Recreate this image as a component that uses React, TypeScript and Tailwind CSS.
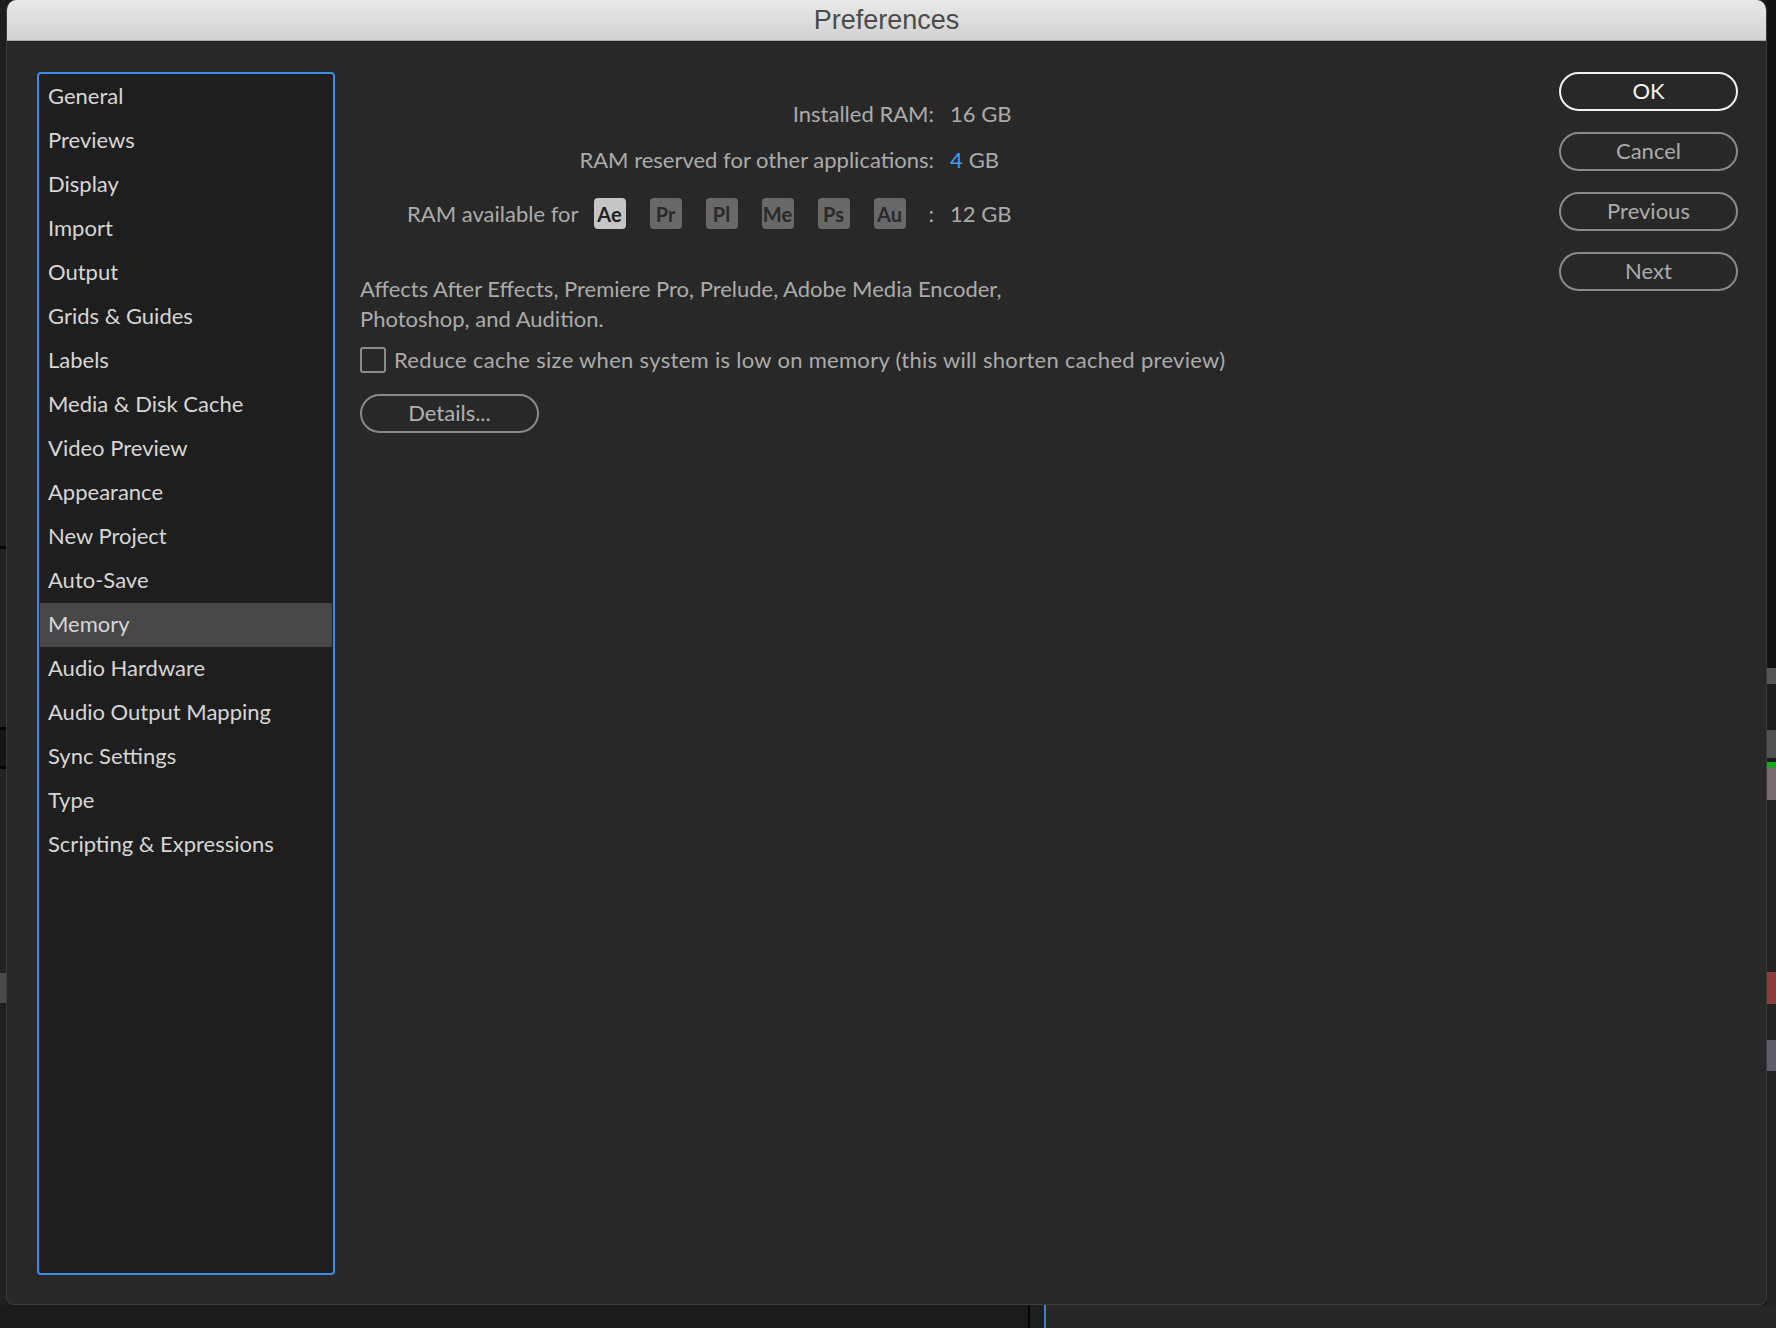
import React from 'react';

const categories = [
  'General',
  'Previews',
  'Display',
  'Import',
  'Output',
  'Grids & Guides',
  'Labels',
  'Media & Disk Cache',
  'Video Preview',
  'Appearance',
  'New Project',
  'Auto-Save',
  'Memory',
  'Audio Hardware',
  'Audio Output Mapping',
  'Sync Settings',
  'Type',
  'Scripting & Expressions',
];

const apps = ['Ae', 'Pr', 'Pl', 'Me', 'Ps', 'Au'];

// strips of the app window that peek out around the dialog
const rightStrip = [
  { h: 668, c: 'bg-[#121212]' },
  { h: 16, c: 'bg-[#555555]' },
  { h: 46, c: 'bg-[#1c1c1c]' },
  { h: 28, c: 'bg-[#525252]' },
  { h: 4, c: 'bg-[#1c1c1c]' },
  { h: 6, c: 'bg-[#1fa51f]' },
  { h: 32, c: 'bg-[#7a6b70]' },
  { h: 172, c: 'bg-[#222222]' },
  { h: 32, c: 'bg-[#8c3b3b]' },
  { h: 36, c: 'bg-[#222222]' },
  { h: 31, c: 'bg-[#5c5c6a]' },
  { h: 234, c: 'bg-[#222222]' },
];

const leftStrip = [
  { h: 546, c: 'bg-[#1e1e1e]' },
  { h: 3, c: 'bg-[#050505]' },
  { h: 178, c: 'bg-[#222222]' },
  { h: 3, c: 'bg-[#050505]' },
  { h: 36, c: 'bg-[#141414]' },
  { h: 3, c: 'bg-[#050505]' },
  { h: 204, c: 'bg-[#232323]' },
  { h: 30, c: 'bg-[#4a4a4a]' },
  { h: 302, c: 'bg-[#202020]' },
];

function PillButton({ label, primary }: { label: string; primary?: boolean }) {
  return (
    <button
      className={`h-[39px] w-[179px] rounded-full border-2 bg-transparent text-[22px] leading-none pb-[2px] ${
        primary ? 'border-[#f2f2f2] text-[#f4f4f4]' : 'border-[#8a8a8a] text-[#ababab]'
      }`}
    >
      {label}
    </button>
  );
}

export default function App() {
  return (
    <div className="w-[1776px] h-[1328px] overflow-hidden bg-[#1a1a1a] flex flex-col font-['Lato',sans-serif]">
      <div className="flex h-[1305px]">
        <div className="w-[6px] flex flex-col">
          {leftStrip.map((s, i) => (
            <div key={i} className={s.c} style={{ height: s.h }} />
          ))}
        </div>

        {/* Dialog window */}
        <div className="w-[1761px] flex flex-col rounded-t-[10px] rounded-b-[8px] overflow-hidden border-x border-b border-[#3b3b3b] bg-[#282828]">
          <div className="h-[41px] shrink-0 bg-gradient-to-b from-[#e9e9e9] to-[#d2d2d2] border-b border-[#a9a9a9] flex items-center justify-center">
            <span className="font-['Liberation_Sans',sans-serif] text-[27px] leading-none mt-[1px] text-[#4b4b4b]">Preferences</span>
          </div>

          <div className="flex-1 flex pl-[30px] pr-[28px] pt-[31px] pb-[29px]">
            {/* Category list */}
            <div className="w-[298px] shrink-0 rounded-[4px] border-2 border-[#3a8de6] bg-[#1e1e1e] p-px">
              {categories.map((c) => (
                <div
                  key={c}
                  className={`h-[44px] flex items-center pl-[8px] pb-[4px] text-[22px] text-[#d6d6d6] ${
                    c === 'Memory' ? 'bg-[#474747]' : ''
                  }`}
                >
                  {c}
                </div>
              ))}
            </div>

            {/* Memory settings */}
            <div className="flex-1 pl-[25px] text-[22px] text-[#ababab]">
              <div className="mt-[25px] h-[32px] grid grid-cols-[574px_1fr] gap-x-[16px] items-center">
                <span className="text-right">Installed RAM:</span>
                <span>16 GB</span>
              </div>
              <div className="mt-[14px] h-[32px] grid grid-cols-[574px_1fr] gap-x-[16px] items-center">
                <span className="text-right">RAM reserved for other applications:</span>
                <span>
                  <span className="text-[#3d9cf2] mr-[6px]">4</span>GB
                </span>
              </div>
              <div className="mt-[22px] h-[32px] grid grid-cols-[574px_1fr] gap-x-[16px] items-center">
                <div className="flex items-center justify-end">
                  <span className="mr-[15px]">RAM available for</span>
                  <div className="flex gap-[24px]">
                    {apps.map((a, i) => (
                      <span
                        key={a}
                        className={`w-[32px] h-[31px] rounded-[4px] flex items-center justify-center text-[20px] font-bold ${
                          i === 0 ? 'bg-[#c5c5c5] text-[#222222]' : 'bg-[#686868] text-[#2a2a2a]'
                        }`}
                      >
                        {a}
                      </span>
                    ))}
                  </div>
                  <span className="ml-[23px]">:</span>
                </div>
                <span>12 GB</span>
              </div>

              <p className="mt-[45px] leading-[30px]">
                Affects After Effects, Premiere Pro, Prelude, Adobe Media Encoder,
                <br />
                Photoshop, and Audition.
              </p>

              <label className="mt-[11px] h-[30px] flex items-center gap-[8px]">
                <span className="w-[26px] h-[26px] rounded-[3px] border-2 border-[#8a8a8a]" />
                <span className="tracking-[0.3px] pb-[2px]">
                  Reduce cache size when system is low on memory (this will shorten cached preview)
                </span>
              </label>

              <button className="mt-[19px] h-[39px] w-[179px] rounded-full border-2 border-[#8a8a8a] text-[22px] leading-none pb-[2px] text-[#b0b0b0]">
                Details...
              </button>
            </div>

            {/* Dialog buttons */}
            <div className="w-[179px] shrink-0 flex flex-col gap-[21px]">
              <PillButton label="OK" primary />
              <PillButton label="Cancel" />
              <PillButton label="Previous" />
              <PillButton label="Next" />
            </div>
          </div>
        </div>

        <div className="w-[9px] flex flex-col">
          {rightStrip.map((s, i) => (
            <div key={i} className={s.c} style={{ height: s.h }} />
          ))}
        </div>
      </div>

      {/* Timeline strip below the dialog */}
      <div className="flex-1 flex">
        <div className="w-[1028px] bg-[#1a1a1a]" />
        <div className="w-[2px] bg-[#050505]" />
        <div className="w-[14px] bg-[#1e1e1e]" />
        <div className="w-[2px] bg-[#3a7fd0]" />
        <div className="flex-1 bg-[#262626]" />
      </div>
    </div>
  );
}
